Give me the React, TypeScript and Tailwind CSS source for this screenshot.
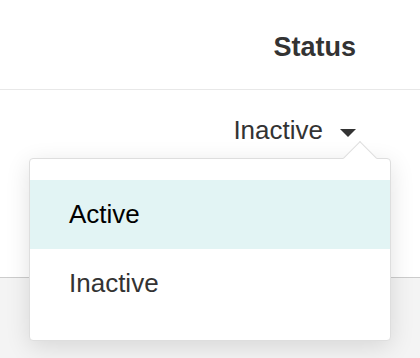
export default function App() {
  return (
    <div
      className="relative w-[420px] h-[358px] overflow-hidden bg-white text-[#333]"
      style={{ fontFamily: '"Liberation Sans", Arial, sans-serif' }}
    >
      <div className="h-[90px] flex items-center justify-end pt-[5px] pr-[64px] border-b border-[#e8e8e8]">
        <span className="text-[27px] font-bold">Status</span>
      </div>
      <div className="h-[188px] border-b border-[#cccccc]">
        <div className="h-[80px] flex items-center justify-end pr-[64px]">
          <span className="text-[26px]">Inactive</span>
          <svg width="16" height="8" viewBox="0 0 16 8" className="ml-[17px] mt-[5px]">
            <path d="M0 0 L16 0 L8 8 Z" fill="#333" />
          </svg>
        </div>
      </div>
      <div className="h-[80px] bg-[#f4f4f4]" />

      <div className="absolute left-[29px] top-[158px] w-[362px] h-[183px] rounded-[4px] border border-[#dedede] bg-white shadow-[0_6px_24px_rgba(0,0,0,0.12)]">
        <div className="absolute left-[318px] top-[-13px] w-[24px] h-[24px] rotate-45 bg-white border-l border-t border-[#dedede]" />
        <div className="relative pt-[21px]">
          <div className="h-[69px] bg-[#e2f4f4] flex items-center pl-[39px] text-[26px] text-black">Active</div>
          <div className="h-[69px] flex items-center pl-[39px] text-[26px]">Inactive</div>
        </div>
      </div>
    </div>
  );
}
